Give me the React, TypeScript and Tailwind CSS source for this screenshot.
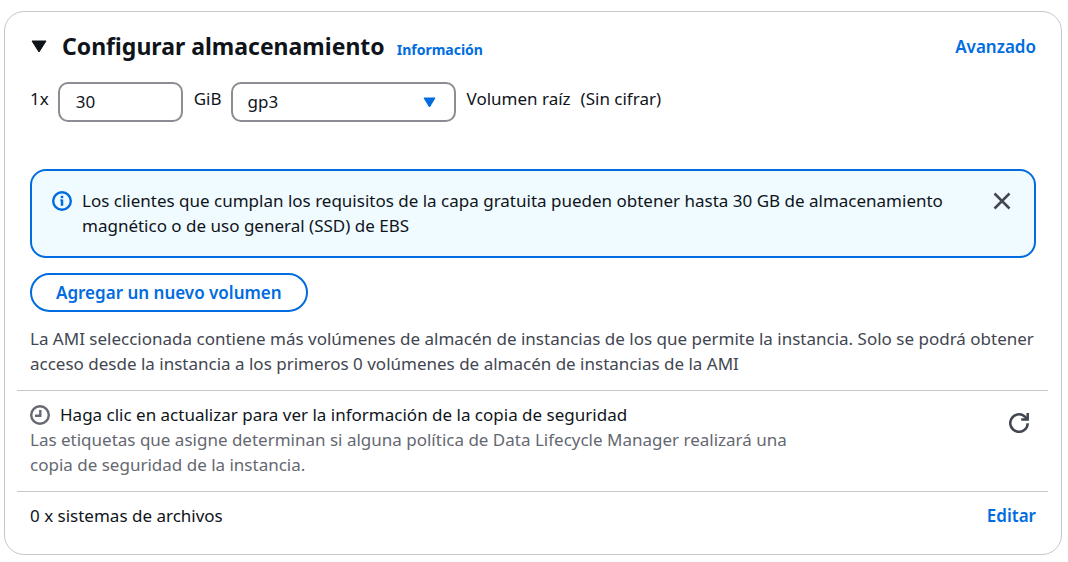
import { useState } from 'react';

function InfoIcon() {
  return (
    <svg viewBox="0 0 20 20" className="mt-[3px] size-5 shrink-0 text-[#006ce0]" fill="none" stroke="currentColor" strokeWidth="2.4" aria-hidden="true">
      <circle cx="10" cy="10" r="8.8" />
      <path d="M10 8.5v6.3M10 4.800v2.400" strokeWidth="2.5" />
      <path d="M8.300 9.100H10" strokeWidth="1.200" />
    </svg>
  );
}

function ClockIcon() {
  return (
    <svg viewBox="0 0 20 20" className="size-5 shrink-0 text-[#656871]" fill="none" stroke="currentColor" strokeWidth="2.4" aria-hidden="true">
      <circle cx="10" cy="10" r="8.8" />
      <path d="M10.3 5v5.8H5" />
    </svg>
  );
}

function CloseIcon() {
  return (
    <svg viewBox="0 0 18 18" className="size-[18px]" fill="none" stroke="currentColor" strokeWidth="2.5" aria-hidden="true">
      <path d="M1.500 1.500l15 15M16.500 1.500l-15 15" />
    </svg>
  );
}

function RefreshIcon() {
  return (
    <svg viewBox="0 0 20 20" className="size-5" fill="none" stroke="currentColor" strokeWidth="2.5" aria-hidden="true">
      <path d="M18.700 10.200A8.700 8.700 0 1 1 15.700 3.500L18 6" />
      <path d="M18.700 0v6.500H12.200" />
      <path d="M18.500 3v3.500H15z" fill="currentColor" stroke="none" />
    </svg>
  );
}

export default function App() {
  const [size, setSize] = useState('30');
  const [open, setOpen] = useState(true);
  const [notice, setNotice] = useState(true);

  return (
    <main className="pt-[11px] pr-1.5 pb-2 pl-1 font-['Noto_Sans',sans-serif] text-[17px] leading-[25px] text-[#0f141a]">
      <section className="rounded-[20px] border border-[#c6c6cd] bg-white px-3 pt-[18px] pb-[26px]">
        <header className="flex items-center justify-between pr-[13px] pl-[14px]">
          <div className="flex items-end gap-3">
            <h2 className="text-[23px] leading-8 font-bold">
              <button type="button" aria-expanded={open} onClick={() => setOpen(!open)} className="flex items-center gap-[15px]">
                <svg viewBox="0 0 16 13" className="h-[13px] w-4" fill="currentColor" stroke="currentColor" strokeLinejoin="round" aria-hidden="true">
                  <path d="M1 1h14L8 12z" />
                </svg>
                Configurar almacenamiento
              </button>
            </h2>
            <a href="#info" className="text-sm leading-[25px] font-bold text-[#006ce0]">Información</a>
          </div>
          <a href="#avanzado" className="font-semibold text-[#006ce0]">Avanzado</a>
        </header>

        {open && (
          <>
            <div className="px-[13px]">
              <div className="mt-5 flex items-start gap-[9px]">
                <label htmlFor="volume-size" className="mt-1">1x</label>
                <input
                  id="volume-size"
                  value={size}
                  onChange={(e) => setSize(e.target.value)}
                  className="h-10 w-[125px] rounded-[10px] border-2 border-[#8c8c94] bg-white px-4 pb-0.5"
                />
                <label htmlFor="volume-type" className="mt-1 ml-0.5">GiB</label>
                <div className="grid w-[225px] items-center">
                  <select
                    id="volume-type"
                    defaultValue="gp3"
                    className="col-start-1 row-start-1 h-10 w-full appearance-none rounded-[10px] border-2 border-[#8c8c94] bg-white px-[15px] pb-0.5"
                  >
                    <option>gp3</option>
                    <option>gp2</option>
                    <option>io1</option>
                  </select>
                  <svg viewBox="0 0 13 11" className="pointer-events-none col-start-1 row-start-1 mr-5 h-[11px] w-[13px] justify-self-end text-[#006ce0]" fill="currentColor" stroke="currentColor" strokeLinejoin="round" aria-hidden="true">
                    <path d="M1 1h11L6.500 10z" />
                  </svg>
                </div>
                <p className="mt-1 ml-0.5 flex gap-2.5">
                  <span>Volumen raíz</span>
                  <span>(Sin cifrar)</span>
                </p>
              </div>

              {notice && (
                <div role="status" className="mt-[47px] flex items-start gap-2.5 rounded-2xl border-2 border-[#006ce0] bg-[#f0fbff] pt-[17px] pr-[23px] pb-[18px] pl-5">
                  <InfoIcon />
                  <p className="flex-1">
                    Los clientes que cumplan los requisitos de la capa gratuita pueden obtener hasta 30 GB de almacenamiento
                    magnético o de uso general (SSD) de EBS
                  </p>
                  <button type="button" aria-label="Cerrar" onClick={() => setNotice(false)} className="mt-1 ml-8 text-[#424650]">
                    <CloseIcon />
                  </button>
                </div>
              )}

              <button type="button" className="mt-[15px] flex h-[39px] items-center rounded-full border-2 border-[#006ce0] px-6 font-semibold text-[#006ce0]">
                Agregar un nuevo volumen
              </button>

              <p className="mt-[14px] text-[#424650]">
                La AMI seleccionada contiene más volúmenes de almacén de instancias de los que permite la instancia. Solo se podrá obtener
                acceso desde la instancia a los primeros 0 volúmenes de almacén de instancias de la AMI
              </p>
            </div>

            <div className="mr-px mt-[14px] flex items-start justify-between border-y border-[#c6c6cd] pt-[11px] pr-3 pb-[14px] pl-[13px]">
              <div className="max-w-[770px]">
                <p className="flex items-center gap-2.5">
                  <ClockIcon />
                  Haga clic en actualizar para ver la información de la copia de seguridad
                </p>
                <p className="text-[#656871]">
                  Las etiquetas que asigne determinan si alguna política de Data Lifecycle Manager realizará una copia de
                  seguridad de la instancia.
                </p>
              </div>
              <button type="button" aria-label="Actualizar" className="mt-[11px] mr-[7px] text-[#424650]">
                <RefreshIcon />
              </button>
            </div>

            <div className="flex items-center justify-between px-[13px] pt-[11px]">
              <span>0 x sistemas de archivos</span>
              <a href="#editar" className="font-semibold text-[#006ce0]">Editar</a>
            </div>
          </>
        )}
      </section>
    </main>
  );
}
